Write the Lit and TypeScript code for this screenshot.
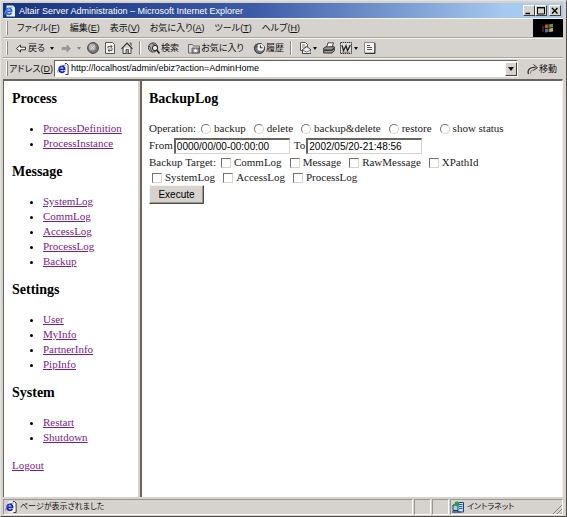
import { LitElement, html, css, svg, nothing } from "lit";
import { customElement, property } from "lit/decorators.js";

const icons: Record<string, unknown> = {
  back: svg`<path d="M1.5 6.5 5.5 3v2.2h5v2.6h-5V10z" fill="#fff" stroke="#333"/>`,
  forward: svg`<path d="M10.5 6.5 7 3v2.4H2v2.2h5V10z" fill="#999" stroke="#888" stroke-width=".6"/>`,
  stop: svg`<circle cx="6" cy="6" r="5.4" fill="#777" stroke="#444"/><circle cx="5.2" cy="5.2" r="3.4" fill="#b4b4b4"/><path d="M3.8 3.8l3.4 3.4M7.2 3.8l-3.4 3.4" stroke="#ddd"/>`,
  refresh: svg`<path d="M1.5.5h7l2 2v9h-9z" fill="#f4f4f0" stroke="#555"/><path d="M4 6.500V4.600h4M6.600 3 8.200 4.600 6.600 6M8 6v2.400H4M5.600 7 4 8.400l1.600 1.400" fill="none" stroke="#444" stroke-width=".9"/>`,
  home: svg`<path d="M2 6v5.5h8V6" fill="#eee" stroke="#444"/><path d="M.5 6.8 6 1l5.500 5.800" fill="none" stroke="#333" stroke-width="1.2"/><path d="M8.500 1h1.600v3M5 11.500v-4h2.500v4" fill="#999" stroke="#444" stroke-width=".8"/>`,
  search: svg`<circle cx="5" cy="5.500" r="4.600" fill="#aaa" stroke="#444"/><path d="M1 4c2 1 1 3 3 5M4 1c0 2 3 1 4 3" fill="none" stroke="#555"/><circle cx="7" cy="6" r="2.600" fill="#eee" stroke="#222"/><path d="M8.800 8l2.700 3.400" stroke="#222" stroke-width="1.600"/>`,
  star: svg`<path d="M.5 2.500h4l1 1.500h6v7H.5z" fill="#ddd" stroke="#666"/><path d="M4 6h7v5H4z" fill="#999" stroke="#444" stroke-width=".7"/><path d="M7.500 6.500l.7 1.300 1.400.2-1 1 .2 1.400-1.300-.7-1.300.7.2-1.400-1-1 1.400-.2z" fill="#fff"/>`,
  history: svg`<circle cx="6.500" cy="6.500" r="5" fill="#777" stroke="#333"/><circle cx="7.600" cy="5.400" r="3.400" fill="#f2f2f2"/><path d="M7.400 3.200v2.600h2.200" fill="none" stroke="#222"/><path d="M.3 5.500 3 1.500l2 4z" fill="#555"/>`,
  mail: svg`<path d="M1.500.5h5l2 2v6h-7z" fill="#fff" stroke="#555"/><path d="M3 3h3M3 5h4" stroke="#777"/><path d="M3.500 7.500 8 4.500l4 3.500v3.500H3.500z" fill="#eee" stroke="#444"/><path d="M3.500 8l4 2 4.500-2" fill="none" stroke="#555" stroke-width=".8"/>`,
  print: svg`<path d="M3.500 5.500 5 .8h5.500L9 5.500z" fill="#fff" stroke="#444"/><path d="M.7 6.200 3 4.800h8.300v4L9 11H.7z" fill="#999" stroke="#333"/><path d="M1 8.200h8l2-1.800" fill="none" stroke="#222" stroke-width="1.200"/>`,
  word: svg`<path d="M.5.5h11v11H.5z" fill="#ddd" stroke="#333" stroke-dasharray="1.500 .6"/><path d="M2 3.200l1.500 5.500L6 3.800l1.500 4.900L10.300 3" fill="none" stroke="#222" stroke-width="1.300"/><path d="M2 10.200h8" stroke="#777"/>`,
  edit: svg`<path d="M.5.5h10v10.500H.5z" fill="#f4f4f4" stroke="#888"/><path d="M11 1v10.500H1" fill="none" stroke="#333"/><path d="M3 3.500h3M3 5.500h5M3 7.500h5" stroke="#555"/>`,
  go: svg`<path d="M1.500 11C0 7 3 4 8.500 4.500" fill="none" stroke="#333" stroke-width="1.300"/><path d="M6.500 1.500 10.500 4.700 6.200 7.500" fill="none" stroke="#333"/><path d="M3.500 10.500C3.500 8 5 6.800 7 7" fill="none" stroke="#777"/>`,
  ie: svg`<path d="M3.500.5h5l2.500 2v9H3.500z" fill="#fff"/><path d="M8 .5h1.500l1.600 1.600v9.400H8.500" fill="none" stroke="#333"/><path d="M2.200 6.400h5.400C7.600 4.400 6.500 3.300 5 3.300S2.200 4.500 2.200 6.300 3.400 9.300 5 9.300c1.100 0 1.900-.4 2.400-1.300" fill="none" stroke="#1420c8" stroke-width="1.700"/><path d="M.8 9.500C.3 7 4.500 2 8.700 2" fill="none" stroke="#3a62e0" stroke-width=".9"/>`,
  app: svg`<path d="M2.500.5h6.500l2 2v9H2.500z" fill="#e8eefc"/><path d="M2.200 6.400h5.400C7.600 4.400 6.500 3.300 5 3.300S2.200 4.500 2.200 6.300 3.400 9.300 5 9.300c1.100 0 1.900-.4 2.400-1.300" fill="none" stroke="#2a62e0" stroke-width="1.700"/><path d="M.8 9.500C.3 7 4.500 2 8.700 2" fill="none" stroke="#6aa0ff"/>`,
  zone: svg`<path d="M1 4h7v5.500H1z" fill="#9fd8dc" stroke="#235"/><path d="M6 1.500h5.500V11H6z" fill="#c8dcf0" stroke="#246"/><path d="M7 3.500h3.500M7 5.500h3.500M7 7.500h3.500" stroke="#2858a8"/><circle cx="5" cy="3" r="2.400" fill="#2a9a48"/><path d="M0 11h8.500" stroke="#1c5c90" stroke-width="1.500"/>`,
  min: svg`<path d="M2.500 8.500h4.500" stroke="#000" stroke-width="1.500"/>`,
  max: svg`<path d="M2.500 2.500h7v6.500h-7z" fill="none" stroke="#000"/><path d="M2 2.700h8" stroke="#000" stroke-width="1.400"/>`,
  close: svg`<path d="M3 3l5.500 5.500M8.500 3 3 8.500" stroke="#000" stroke-width="1.400"/>`,
  flag: svg`<g transform="skewY(-6)"><path d="M3 3h3.500v3.500H3z" fill="#c8532c"/><path d="M7.200 3H11v3.500H7.200z" fill="#4f9c50"/><path d="M3 7.200h3.500v3.500H3z" fill="#4672c4"/><path d="M7.200 7.200H11v3.500H7.200z" fill="#cdb040"/></g><path d="M0 5h2M0 7h2M0 9h2" stroke="#a05040" stroke-width=".8"/>`,
};

const icon = (name: string) =>
  html`<svg class="icon" viewBox="0 0 12 12" aria-hidden="true">${icons[name]}</svg>`;

const chromeBase = css`
  * { box-sizing: border-box; }
  button { font: inherit; color: inherit; background: none; border: 0; padding: 0; margin: 0; }
  .icon { width: 12px; height: 12px; flex: none; display: block; }
`;

@customElement("browser-bars")
class BrowserBars extends LitElement {
  static styles = [chromeBase, css`
    :host { display: block; }
    .title {
      display: flex; align-items: center; gap: 3px; height: 15px; padding: 0 2px 0 1px;
      color: #fff; background: linear-gradient(90deg, #17347f, #3c5ca8 45%, #a6caf0 90%);
      font: 9px/14px "Liberation Sans", sans-serif; white-space: nowrap;
    }
    .name { flex: 1; overflow: hidden; font-size: 9px; font-weight: normal; margin: 0; }
    .controls { display: flex; }
    .controls button, .drop {
      display: flex; align-items: center; justify-content: center;
      width: 12px; height: 11px; background: #d6d3ce;
      border: 1px solid; border-color: #fff #404040 #404040 #fff;
    }
    .controls button:last-child { margin-left: 2px; }
    .bar {
      display: flex; align-items: center; height: 20px; padding-left: 3px;
      border-top: 1px solid #f6f5f2; border-bottom: 1px solid #a9a6a0; white-space: nowrap;
    }
    .grip { align-self: stretch; margin: 2px 0; width: 2px; border-left: 1px solid #fff; border-right: 1px solid #8c8984; }
    .menu { display: flex; flex: 1; gap: 10px; padding-left: 9px; }
    .throbber { align-self: stretch; display: flex; width: 30px; align-items: center; justify-content: center; background: #000; }
    .tools { padding-right: 8px; }
    .set { display: flex; align-items: center; gap: 5px; padding: 0 6px 0 7px; }
    .set button { display: flex; align-items: center; gap: 1px; }
    .wide { gap: 9px; }
    .rule { align-self: stretch; margin: 2px 0; border-left: 1px solid #8c8984; border-right: 1px solid #fff; }
    .caret { border: 2px solid transparent; border-top: 3px solid #111; border-bottom: 0; margin: 0 1px 0 4px; }
    .tight .caret { margin-left: 1px; }
    .dim .caret { border-top-color: #888; }
    .address { gap: 1px; border-bottom: 0; }
    .box {
      flex: 1; min-width: 0; display: flex; align-items: center; gap: 2px; height: 17px; padding: 0 0 0 2px;
      background: #fff; border: 1px solid; border-color: #68655f #fff #fff #68655f;
    }
    .box input { flex: 1; min-width: 0; border: 0; padding: 0; outline: 0; background: none; color: #000; font: 9px/13px "Liberation Sans", sans-serif; }
    .drop { height: 14px; }
    .drop .caret { border-width: 4px 3px 0; margin: 0; }
    .go { display: flex; align-items: center; margin: 0 6px 0 8px; }
  `];

  render() {
    const menus = [["ファイル", "F"], ["編集", "E"], ["表示", "V"], ["お気に入り", "A"], ["ツール", "T"], ["ヘルプ", "H"]];
    return html`
      <header class="title">
        ${icon("app")}
        <h1 class="name">Altair Server Administration – Microsoft Internet Explorer</h1>
        <div class="controls">
          <button aria-label="Minimize">${icon("min")}</button>
          <button aria-label="Maximize">${icon("max")}</button>
          <button aria-label="Close">${icon("close")}</button>
        </div>
      </header>
      <div class="bar">
        <span class="grip"></span>
        <nav class="menu">${menus.map(([t, k]) => html`<button>${t}(<u>${k}</u>)</button>`)}</nav>
        <span class="throbber">${icon("flag")}</span>
      </div>
      <div class="bar tools">
        <span class="grip"></span>
        <div class="set">
          <button>${icon("back")}戻る<span class="caret"></span></button>
          <button class="dim" aria-label="Forward">${icon("forward")}<span class="caret"></span></button>
          <button aria-label="Stop">${icon("stop")}</button>
          <button aria-label="Refresh">${icon("refresh")}</button>
          <button aria-label="Home">${icon("home")}</button>
        </div>
        <span class="rule"></span>
        <div class="set wide">
          <button>${icon("search")}検索</button>
          <button>${icon("star")}お気に入り</button>
          <button>${icon("history")}履歴</button>
        </div>
        <span class="rule"></span>
        <div class="set tight">
          <button aria-label="Mail">${icon("mail")}<span class="caret"></span></button>
          <button aria-label="Print">${icon("print")}</button>
          <button aria-label="Word">${icon("word")}<span class="caret"></span></button>
          <button aria-label="Edit">${icon("edit")}</button>
        </div>
      </div>
      <div class="bar address">
        <span class="grip"></span>
        <label for="url">アドレス(<u>D</u>)</label>
        <div class="box">
          ${icon("ie")}
          <input id="url" value="http://localhost/admin/ebiz?action=AdminHome">
          <button class="drop" aria-label="History list"><span class="caret"></span></button>
        </div>
        <button class="go">${icon("go")}移動</button>
      </div>`;
  }
}

@customElement("side-menu")
class SideMenu extends LitElement {
  static styles = css`
    :host { display: block; padding: 10px 8px; }
    h3 { margin: 0; font-size: 14px; line-height: 16px; }
    ul { margin: 14px 0 13px; padding-left: 31px; }
    li { line-height: 15px; }
    a { color: #7d1a8c; }
    .logout { margin: 0; line-height: 15px; }
  `;

  private sections: [string, string[]][] = [
    ["Process", ["ProcessDefinition", "ProcessInstance"]],
    ["Message", ["SystemLog", "CommLog", "AccessLog", "ProcessLog", "Backup"]],
    ["Settings", ["User", "MyInfo", "PartnerInfo", "PipInfo"]],
    ["System", ["Restart", "Shutdown"]],
  ];

  render() {
    return html`
      ${this.sections.map(([name, links]) => html`
        <h3>${name}</h3>
        <ul>${links.map((l) => html`<li><a href="#${l}">${l}</a></li>`)}</ul>`)}
      <p class="logout"><a href="#Logout">Logout</a></p>`;
  }
}

@customElement("backup-form")
class BackupForm extends LitElement {
  static styles = css`
    * { box-sizing: border-box; }
    :host { display: block; padding: 10px 7px; }
    h3 { margin: 0 0 14px; font-size: 14px; line-height: 16px; }
    form { display: flex; flex-direction: column; align-items: flex-start; color: #222; }
    .row { display: flex; flex-wrap: wrap; align-items: center; column-gap: 8px; line-height: 15px; }
    .lead { margin-right: -3px; }
    .indent { padding-left: 3px; }
    .option { display: flex; align-items: center; gap: 3px; }
    .option input {
      appearance: none; width: 10px; height: 10px; margin: 0; background: #fff;
      border: 1px solid; border-color: #77746f #d6d3ce #d6d3ce #77746f;
    }
    .option input[type="radio"] { border-radius: 50%; }
    .option input:checked { background: #333; }
    .dates { column-gap: 4px; line-height: 19px; }
    .date { display: flex; align-items: center; gap: 1px; }
    .date input {
      width: 116px; height: 16px; margin: 0; padding: 0 1px; background: #fff; color: #000;
      border: 1px solid; border-color: #68655f #d6d3ce #d6d3ce #68655f; border-top-width: 2px; border-left-width: 2px;
      font: 10px/12px "Liberation Sans", sans-serif;
    }
    .run {
      width: 55px; height: 19px; padding: 0; color: #000; background: #d6d3ce;
      border: 1px solid; border-color: #f4f3f0 #504d48 #504d48 #f4f3f0; box-shadow: inset -1px -1px #9a9790;
      font: 10px/12px "Liberation Sans", sans-serif;
    }
  `;

  private options(type: string, names: string[]) {
    return names.map((n) => html`
      <label class="option"><input type=${type} name=${type === "radio" ? "operation" : n}>${n}</label>`);
  }

  render() {
    return html`
      <h3>BackupLog</h3>
      <form @submit=${(e: Event) => e.preventDefault()}>
        <div class="row"><span class="lead">Operation:</span>
          ${this.options("radio", ["backup", "delete", "backup&delete", "restore", "show status"])}</div>
        <div class="row dates">
          <label class="date">From<input value="0000/00/00-00:00:00"></label>
          <label class="date">To<input value="2002/05/20-21:48:56"></label>
        </div>
        <div class="row"><span class="lead">Backup Target:</span>
          ${this.options("checkbox", ["CommLog", "Message", "RawMessage", "XPathId"])}</div>
        <div class="row indent">${this.options("checkbox", ["SystemLog", "AccessLog", "ProcessLog"])}</div>
        <button class="run">Execute</button>
      </form>`;
  }
}

@customElement("status-bar")
class StatusBar extends LitElement {
  @property() message = "";
  @property() zone = "";

  static styles = [chromeBase, css`
    :host { display: flex; gap: 1px; height: 16px; white-space: nowrap; font-size: 8px; }
    .cell {
      display: flex; align-items: center; gap: 3px; width: 17px;
      border: 1px solid; border-color: #9a9790 #fff #fff #9a9790;
    }
    .message { flex: 1; padding-left: 1px; }
    .zone { width: 113px; padding-left: 1px; }
    .grip { margin-left: auto; align-self: flex-end; }
  `];

  render() {
    return html`
      <div class="cell message">${icon("ie")}${this.message || nothing}</div>
      <div class="cell"></div>
      <div class="cell"></div>
      <div class="cell zone">${icon("zone")}${this.zone || nothing}
        <svg class="icon grip" viewBox="0 0 12 12"><path d="M3 12l9-9M7 12l5-5M10.500 12l1.500-1.500" stroke="#8c8984"/></svg>
      </div>`;
  }
}

@customElement("app-root")
class AppRoot extends LitElement {
  static styles = css`
    * { box-sizing: border-box; }
    :host {
      box-sizing: border-box; display: flex; flex-direction: column; min-height: 100vh; padding: 2px 3px 1px 2px;
      background: #d6d3ce; color: #111; border: 1px solid; border-color: #e4e2dd #504d48 #504d48 #e4e2dd;
      font: 9px/14px "Liberation Sans", "Noto Sans CJK JP", sans-serif; font-feature-settings: "palt";
    }
    .frames {
      flex: 1; display: grid; grid-template-columns: 134px 4px 1fr; margin: 1px 0 2px;
      border-top: 2px solid #68655f; border-left: 1px solid #68655f; border-right: 1px solid #f4f3f0;
      background: #fff; color: #000; font-family: "Liberation Serif", serif; font-size: 11px;
    }
    .divider { background: #d6d3ce; border-right: 2px solid #68655f; }
  `;

  render() {
    return html`
      <browser-bars></browser-bars>
      <main class="frames">
        <side-menu></side-menu>
        <div class="divider"></div>
        <backup-form></backup-form>
      </main>
      <status-bar message="ページが表示されました" zone="イントラネット"></status-bar>`;
  }
}
